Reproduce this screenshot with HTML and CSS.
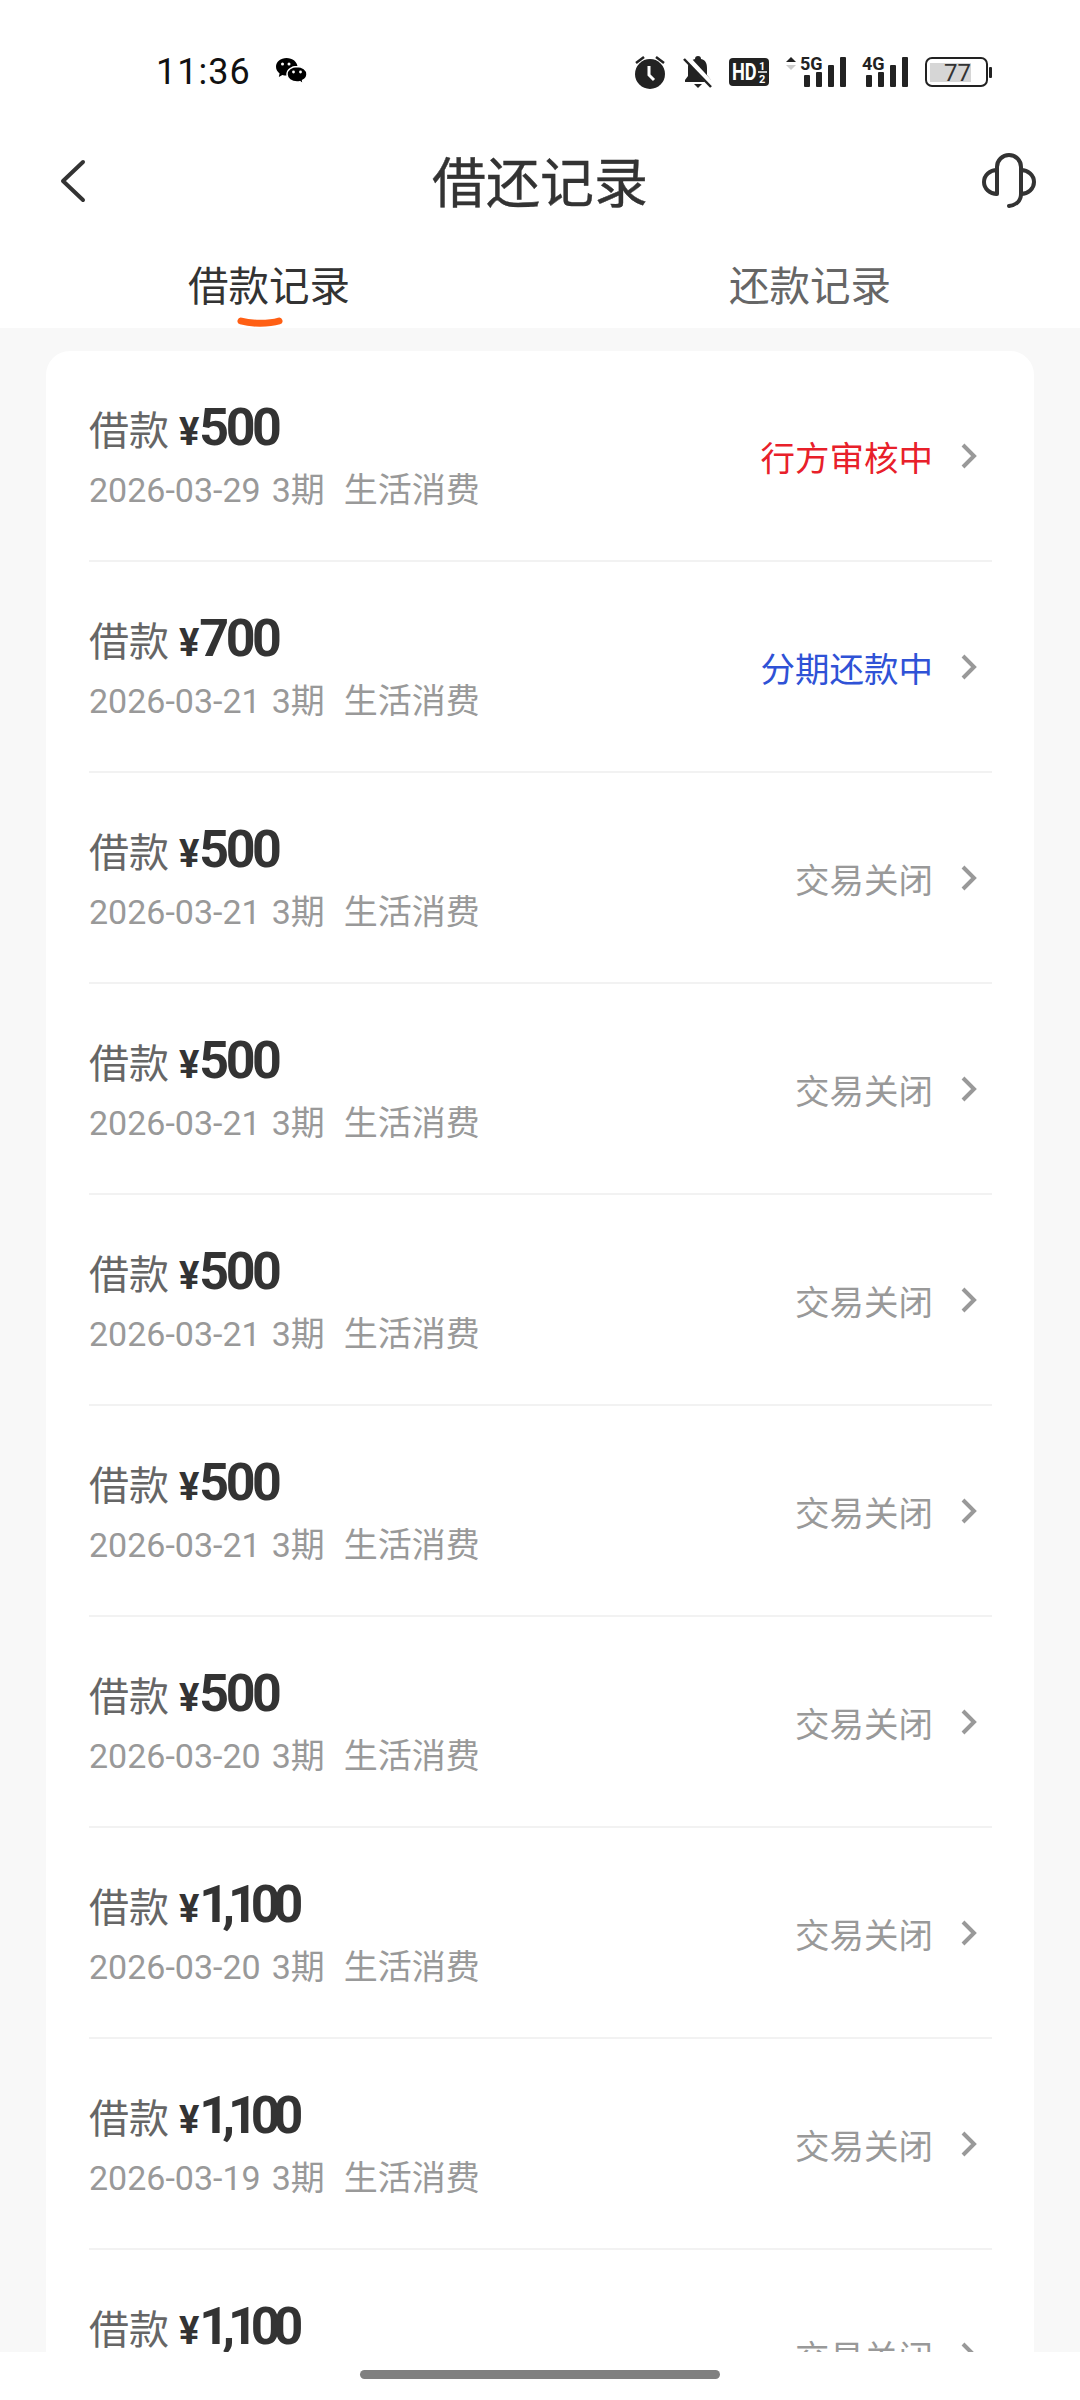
FILE: index.html
```html
<!DOCTYPE html>
<html lang="zh-CN">
<head>
    <meta charset="UTF-8">
    <meta name="viewport" content="width=device-width, initial-scale=1.0">
    <title>借还记录</title>
    <link rel="stylesheet" href="styles.css">
</head>
<body>
    <div class="page">
        <header class="top">
            <!-- Status bar -->
            <div class="status-bar">
                <div class="status-left">
                    <span class="time">11:36</span>
                    <svg class="wechat" viewBox="0 0 33 30" width="33" height="30">
                        <path d="M11.500 1C5.700 1 1 4.900 1 9.800c0 2.700 1.400 5 3.600 6.600L3.800 20l3.600-2c1.200.4 2.600.6 4.100.6 6 0 11-4 11-8.800S17.500 1 11.500 1z" fill="#000"/>
                        <path d="M22 9.500c-5.500 0-10 3.400-10 7.800s4.500 7.800 10 7.800c1 0 2-.1 2.900-.4l3.300 2.300-.6-3.600c2.800-1.300 4.400-3.500 4.400-6.100 0-4.400-4.500-7.800-10-7.800z" fill="#000" stroke="#fff" stroke-width="1.500"/>
                        <circle cx="7.500" cy="7" r="1.500" fill="#fff"/>
                        <circle cx="14" cy="7" r="1.500" fill="#fff"/>
                        <circle cx="18.500" cy="15" r="1.400" fill="#fff"/>
                        <circle cx="25.500" cy="15" r="1.400" fill="#fff"/>
                    </svg>
                </div>
                <div class="status-right">
                    <svg viewBox="0 0 32 34" width="32" height="34">
                        <circle cx="16" cy="19" r="15" fill="#222"/>
                        <path d="M15 11v9l5 5" fill="none" stroke="#fff" stroke-width="3"/>
                        <path d="M2 8l8-6M30 8l-8-6" stroke="#222" stroke-width="2.500"/>
                    </svg>
                    <svg viewBox="0 0 30 34" width="30" height="34">
                        <path d="M15 1c2 0 3 1 3 3 5 1 6 5 6 9v7l4 5v2H2v-2l3-4v-9c0-4 3-7 7-8 0-2 1-3 3-3z" fill="#222"/>
                        <path d="M11 29h8l-4 4z" fill="#222"/>
                        <path d="M3 2l26 28" stroke="#fff" stroke-width="6"/>
                        <path d="M1 4l27 28" stroke="#222" stroke-width="2.500"/>
                    </svg>
                    <svg viewBox="0 0 40 28" width="40" height="28">
                        <rect width="40" height="28" rx="4" fill="#222"/>
                        <text transform="translate(3 22) scale(.76 1)" class="hd-text">HD</text>
                        <text x="30" y="12" class="hd-small">1</text>
                        <text x="30" y="25" class="hd-small">2</text>
                        <path d="M29 14h9" stroke="#fff" stroke-width="1.500"/>
                    </svg>
                    <svg viewBox="0 0 60 40" width="60" height="40">
                        <path d="M0 10l5-5 5 5z" fill="#222"/>
                        <path d="M0 13l5 5 5-5z" fill="#ccc"/>
                        <text x="14" y="18" class="net-text">5G</text>
                        <rect x="18" y="23" width="6" height="12" rx="1" fill="#222"/>
                        <rect x="30" y="20" width="6" height="15" rx="1" fill="#222"/>
                        <rect x="42" y="13" width="6" height="22" rx="1" fill="#222"/>
                        <rect x="54" y="5" width="6" height="30" rx="1" fill="#222"/>
                    </svg>
                    <svg viewBox="0 0 46 40" width="46" height="40">
                        <text x="0" y="18" class="net-text">4G</text>
                        <rect x="4" y="23" width="6" height="12" rx="1" fill="#222"/>
                        <rect x="16" y="20" width="6" height="15" rx="1" fill="#222"/>
                        <rect x="28" y="13" width="6" height="22" rx="1" fill="#222"/>
                        <rect x="40" y="5" width="6" height="30" rx="1" fill="#222"/>
                    </svg>
                    <svg viewBox="0 0 67 30" width="67" height="30">
                        <rect x="1" y="1" width="61" height="28" rx="6" fill="none" stroke="#222" stroke-width="2"/>
                        <rect x="5" y="6" width="41" height="19" fill="#d6d6d6"/>
                        <text x="19" y="24" class="battery-text">77</text>
                        <rect x="64" y="10" width="3" height="11" rx="1" fill="#222"/>
                    </svg>
                </div>
            </div>

            <!-- Nav bar -->
            <div class="nav-bar">
                <svg class="back" viewBox="0 0 26 44" width="26" height="44">
                    <path d="M23 3L3 22l20 19" fill="none" stroke="#333" stroke-width="4" stroke-linecap="round" stroke-linejoin="round"/>
                </svg>
                <h1>借还记录</h1>
                <svg class="service" viewBox="0 0 54 56" width="54" height="56">
                    <path d="M15 41V14a12 12 0 0 1 24 0V41c0 7-5 11-12 12" fill="none" stroke="#333" stroke-width="4" stroke-linecap="round"/>
                    <path d="M15 17a13 12 0 0 0 0 24" fill="none" stroke="#333" stroke-width="4"/>
                    <path d="M39 17a13 12 0 0 1 0 24" fill="none" stroke="#333" stroke-width="4"/>
                </svg>
            </div>

            <!-- Tabs -->
            <div class="tabs">
                <div class="tab active">
                    借款记录
                    <svg class="tab-mark" viewBox="0 0 46 12" width="46" height="12">
                        <path d="M4 4c10 3 28 3 38 0" fill="none" stroke="#ff5f14" stroke-width="7" stroke-linecap="round"/>
                    </svg>
                </div>
                <div class="tab">还款记录</div>
            </div>
        </header>

        <!-- Loan records -->
        <section class="card">
            <div class="row">
                <div class="info">
                    <div class="title">借款 <span class="amount"><span class="yen">¥</span>500</span></div>
                    <div class="meta">2026-03-29<span class="term">3期</span><span class="use">生活消费</span></div>
                </div>
                <span class="state review">行方审核中</span>
                <svg class="arrow" viewBox="0 0 18 28" width="18" height="28"><path d="M3 3l11 11L3 25" fill="none" stroke="#999" stroke-width="4"/></svg>
            </div>
            <div class="row">
                <div class="info">
                    <div class="title">借款 <span class="amount"><span class="yen">¥</span>700</span></div>
                    <div class="meta">2026-03-21<span class="term">3期</span><span class="use">生活消费</span></div>
                </div>
                <span class="state paying">分期还款中</span>
                <svg class="arrow" viewBox="0 0 18 28" width="18" height="28"><path d="M3 3l11 11L3 25" fill="none" stroke="#999" stroke-width="4"/></svg>
            </div>
            <div class="row">
                <div class="info">
                    <div class="title">借款 <span class="amount"><span class="yen">¥</span>500</span></div>
                    <div class="meta">2026-03-21<span class="term">3期</span><span class="use">生活消费</span></div>
                </div>
                <span class="state">交易关闭</span>
                <svg class="arrow" viewBox="0 0 18 28" width="18" height="28"><path d="M3 3l11 11L3 25" fill="none" stroke="#999" stroke-width="4"/></svg>
            </div>
            <div class="row">
                <div class="info">
                    <div class="title">借款 <span class="amount"><span class="yen">¥</span>500</span></div>
                    <div class="meta">2026-03-21<span class="term">3期</span><span class="use">生活消费</span></div>
                </div>
                <span class="state">交易关闭</span>
                <svg class="arrow" viewBox="0 0 18 28" width="18" height="28"><path d="M3 3l11 11L3 25" fill="none" stroke="#999" stroke-width="4"/></svg>
            </div>
            <div class="row">
                <div class="info">
                    <div class="title">借款 <span class="amount"><span class="yen">¥</span>500</span></div>
                    <div class="meta">2026-03-21<span class="term">3期</span><span class="use">生活消费</span></div>
                </div>
                <span class="state">交易关闭</span>
                <svg class="arrow" viewBox="0 0 18 28" width="18" height="28"><path d="M3 3l11 11L3 25" fill="none" stroke="#999" stroke-width="4"/></svg>
            </div>
            <div class="row">
                <div class="info">
                    <div class="title">借款 <span class="amount"><span class="yen">¥</span>500</span></div>
                    <div class="meta">2026-03-21<span class="term">3期</span><span class="use">生活消费</span></div>
                </div>
                <span class="state">交易关闭</span>
                <svg class="arrow" viewBox="0 0 18 28" width="18" height="28"><path d="M3 3l11 11L3 25" fill="none" stroke="#999" stroke-width="4"/></svg>
            </div>
            <div class="row">
                <div class="info">
                    <div class="title">借款 <span class="amount"><span class="yen">¥</span>500</span></div>
                    <div class="meta">2026-03-20<span class="term">3期</span><span class="use">生活消费</span></div>
                </div>
                <span class="state">交易关闭</span>
                <svg class="arrow" viewBox="0 0 18 28" width="18" height="28"><path d="M3 3l11 11L3 25" fill="none" stroke="#999" stroke-width="4"/></svg>
            </div>
            <div class="row">
                <div class="info">
                    <div class="title">借款 <span class="amount long"><span class="yen">¥</span>1,100</span></div>
                    <div class="meta">2026-03-20<span class="term">3期</span><span class="use">生活消费</span></div>
                </div>
                <span class="state">交易关闭</span>
                <svg class="arrow" viewBox="0 0 18 28" width="18" height="28"><path d="M3 3l11 11L3 25" fill="none" stroke="#999" stroke-width="4"/></svg>
            </div>
            <div class="row">
                <div class="info">
                    <div class="title">借款 <span class="amount long"><span class="yen">¥</span>1,100</span></div>
                    <div class="meta">2026-03-19<span class="term">3期</span><span class="use">生活消费</span></div>
                </div>
                <span class="state">交易关闭</span>
                <svg class="arrow" viewBox="0 0 18 28" width="18" height="28"><path d="M3 3l11 11L3 25" fill="none" stroke="#999" stroke-width="4"/></svg>
            </div>
            <div class="row">
                <div class="info">
                    <div class="title">借款 <span class="amount long"><span class="yen">¥</span>1,100</span></div>
                    <div class="meta"></div>
                </div>
                <span class="state">交易关闭</span>
                <svg class="arrow" viewBox="0 0 18 28" width="18" height="28"><path d="M3 3l11 11L3 25" fill="none" stroke="#999" stroke-width="4"/></svg>
            </div>
        </section>

        <!-- Gesture bar sits over the list -->
        <div class="gesture-bar"><span class="handle"></span></div>
    </div>
</body>
</html>
```

FILE: styles.css
```css
* {
    margin: 0;
    padding: 0;
    box-sizing: border-box;
}

body {
    font-family: Roboto, "Noto Sans CJK SC", sans-serif;
    background-color: #f8f8f8;
    color: #333;
}

.page {
    position: relative;
    width: 1080px;
    height: 2400px;
    overflow: hidden;
}

.top {
    background-color: #fff;
    height: 328px;
}

.status-bar {
    display: flex;
    justify-content: space-between;
    align-items: center;
    height: 144px;
    padding: 0 88px 0 156px;
}

.status-left {
    display: flex;
    align-items: center;
    gap: 24px;
}

.time {
    font-size: 36px;
    color: #111;
    letter-spacing: 1px;
}

.status-right {
    display: flex;
    align-items: center;
    gap: 16.6px;
}

.hd-text {
    font: 700 24px Roboto, sans-serif;
    fill: #fff;
}

.hd-small {
    font: 700 11px Roboto, sans-serif;
    fill: #fff;
}

.net-text {
    font: 700 18px Roboto, sans-serif;
    fill: #222;
}

.battery-text {
    font: 400 24px Roboto, sans-serif;
    fill: #333;
}

.nav-bar {
    display: grid;
    grid-template-columns: 1fr auto 1fr;
    align-items: center;
    height: 74px;
    padding: 0 44px;
}

.back {
    margin-left: 16px;
}

.service {
    justify-self: end;
}

h1 {
    padding-top: 7px;
    font-size: 54px;
    line-height: 60px;
    font-weight: 400;
    color: #333;
    -webkit-text-stroke: 0.4px #333;
}

.tabs {
    display: flex;
    justify-content: space-between;
    padding: 0 189px 0 188px;
    margin-top: 41px;
}

.tab {
    position: relative;
    width: 162px;
    text-align: center;
    font-size: 40.5px;
    line-height: 56px;
    color: #666;
}

.tab.active {
    color: #333;
}

.tab-mark {
    position: absolute;
    left: 49px;
    top: 58px;
}

.card {
    margin: 23px 46px 0;
    padding: 0 42px 0 43px;
    background-color: #fff;
    border-radius: 24px;
}

.row {
    display: flex;
    align-items: center;
    height: 211px;
    padding-right: 14px;
    border-bottom: 2px solid #f2f2f2;
}

.info {
    flex: 1;
}

.title {
    font-size: 40px;
    line-height: 58px;
    margin-bottom: 6px;
    color: #666;
}

.amount {
    font-family: Roboto, sans-serif;
    font-size: 52px;
    font-weight: 700;
    color: #333;
    letter-spacing: -3.5px;
}

.amount.long {
    letter-spacing: -7px;
}

.yen {
    font-size: 38px;
    letter-spacing: 0;
}

.meta {
    min-height: 46px;
    font-size: 34px;
    line-height: 46px;
    color: #999;
}

.term {
    margin-left: 11px;
}

.use {
    margin-left: 19px;
}

.state {
    margin-top: 1px;
    font-size: 34.5px;
    color: #999;
}

.state.review {
    color: #e8202a;
}

.state.paying {
    color: #2f52d6;
}

.arrow {
    margin-left: 27px;
}

.gesture-bar {
    position: absolute;
    left: 0;
    right: 0;
    bottom: 0;
    display: flex;
    justify-content: center;
    height: 48px;
    padding-top: 18px;
    background-color: #fff;
}

.handle {
    width: 360px;
    height: 9px;
    border-radius: 5px;
    background-color: #808080;
}
```
